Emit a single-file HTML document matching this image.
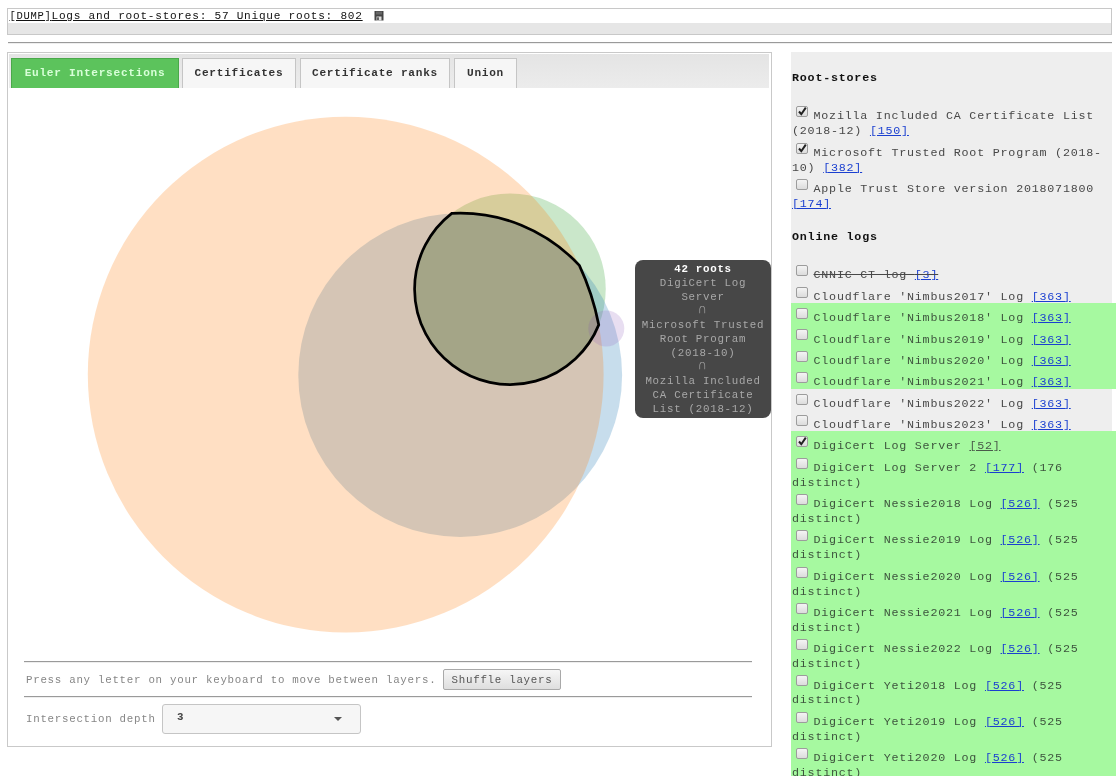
<!DOCTYPE html><html><head><meta charset="utf-8"><title>Logs and root-stores</title><style>
html,body{margin:0;padding:0;background:#fff;}
body{will-change:transform;}
body{width:1116px;height:776px;overflow:hidden;position:relative;font-family:"Liberation Mono",monospace;font-size:11.70px;letter-spacing:0.780px;color:#222;}
.abs{position:absolute;}
a{color:#1a3fd0;text-decoration:underline;}
#top{left:7px;top:8px;width:1103px;height:25px;border:1px solid #c8c8c8;background:#fff;box-sizing:content-box;}
#top .sb{left:0;top:14px;width:1103px;height:11px;background:#e6e6e6;}
#title{left:9.5px;top:9px;font-size:11.12px;letter-spacing:0.741px;line-height:15px;color:#111;text-decoration:underline;white-space:pre;}
#hr0{left:8px;top:42px;width:1104px;height:0;border-top:1px solid #9a9a9a;border-bottom:1px solid #eee;}
#left{left:7px;top:52px;width:763px;height:693px;border:1px solid #c9c9c9;background:#fff;}
#nav{left:1px;top:1px;width:760px;height:33.8px;background:linear-gradient(#e4e4e4,#ececec);}
.tab{position:absolute;top:3.5px;height:30px;box-sizing:border-box;border:1px solid #c5c5c5;border-bottom:none;background:#f6f6f6;font-size:11.12px;letter-spacing:0.741px;font-weight:bold;color:#333;line-height:28px;text-align:center;white-space:pre;}
.tab.act{background:#5cc35c;border-color:#4aa84a;color:#d8ffd8;}
#right{left:791px;top:52px;width:321px;height:740px;background:#eee;}
.h{position:absolute;left:792px;font-weight:bold;font-size:11.70px;letter-spacing:0.780px;line-height:15px;color:#111;white-space:pre;}
.row{position:absolute;left:791px;width:325px;}
.row.g{background:#a6f9a0;}
.row.g .t{color:#3d543d;}
.row .t{position:absolute;white-space:pre;font-size:11.70px;letter-spacing:0.780px;line-height:15px;color:#484848;}
.cb{position:absolute;left:5px;top:5px;width:10px;height:9px;border:1px solid #9c9c9c;border-radius:2px;background:linear-gradient(#f4f4f4,#dcdcdc);}
.cb svg{position:absolute;left:0;top:-1px;}
.hr{position:absolute;left:24px;width:728px;height:0;border-top:1px solid #9a9a9a;border-bottom:1px solid #eee;}
#press{left:26px;top:673.2px;font-size:10.80px;letter-spacing:0.720px;line-height:15px;color:#868686;white-space:pre;}
#btn{left:443px;top:669px;width:116px;height:19px;border:1px solid #a9a9a9;border-radius:2px;background:linear-gradient(#f6f6f6,#dedede);font-size:10.80px;letter-spacing:0.720px;line-height:21px;text-align:center;color:#555;white-space:pre;}
#depth{left:26px;top:712.2px;font-size:10.80px;letter-spacing:0.720px;line-height:15px;color:#868686;white-space:pre;}
#sel{left:162px;top:704px;width:197px;height:28px;border:1px solid #c5c5c5;border-radius:3px;background:#f6f6f6;}
#sel .v{left:14px;top:5px;font-size:10.80px;letter-spacing:0.720px;font-weight:bold;line-height:15px;color:#444;}
#sel .ar{left:171px;top:12px;width:0;height:0;border-left:4px solid transparent;border-right:4px solid transparent;border-top:4px solid #555;}
#tip{left:635px;top:260px;width:128px;height:154px;padding:2px 4px;border-radius:8px;background:rgba(51,51,51,0.9);color:#a8a8a8;font-size:10.80px;letter-spacing:0.720px;line-height:14px;text-align:center;white-space:pre;}
#tip b{color:#fff;}
.cap{display:inline-block;transform:scale(1.15,1.35);transform-origin:50% 85%;}
</style></head><body>
<div id="top" class="abs"><div class="sb abs"></div></div>
<div id="title" class="abs"><span style="font-size:10.5px;letter-spacing:0.70px">[DUMP]</span>Logs and root-stores: 57 Unique roots: 802</div>
<svg class="abs" style="left:374px;top:10px" width="10" height="11" viewBox="0 0 10 11"><path d="M0.5 1 h9 v9.5 h-9 z" fill="#444"/><rect x="2" y="1.5" width="6" height="3" fill="#666"/><rect x="2.5" y="6.5" width="5" height="4" fill="#ddd"/><rect x="3.2" y="7.3" width="1.6" height="2.7" fill="#444"/></svg>
<div id="hr0" class="abs"></div>
<div id="left" class="abs">
<div id="nav" class="abs">
<div class="tab act" style="left:2px;width:168px">Euler Intersections</div>
<div class="tab" style="left:173px;width:114px">Certificates</div>
<div class="tab" style="left:291px;width:150px">Certificate ranks</div>
<div class="tab" style="left:445px;width:63px">Union</div>
</div>
</div>
<svg class="abs" style="left:0;top:88px" width="772" height="570" viewBox="0 88 772 570">
<circle cx="510.16" cy="289.03" r="95.57" fill="#2ca02c" fill-opacity="0.25"/>
<circle cx="460.2" cy="375.05" r="161.9" fill="#1f77b4" fill-opacity="0.25"/>
<circle cx="345.7" cy="374.59" r="257.89" fill="#ff7f0e" fill-opacity="0.25"/>
<circle cx="606.3" cy="328.5" r="18" fill="#9467bd" fill-opacity="0.22"/>
<path d="M451.77 213.37 A161.9 161.9 0 0 1 579.35 265.44 A257.89 257.89 0 0 1 598.75 324.88 A95.57 95.57 0 1 1 451.77 213.37 Z" fill="#000" fill-opacity="0.1" stroke="#000" stroke-width="2.7" stroke-linejoin="miter"/>
</svg>
<div id="tip" class="abs"><b>42 roots</b>
DigiCert Log
Server
<span class="cap">∩</span>
Microsoft Trusted
Root Program
(2018-10)
<span class="cap">∩</span>
Mozilla Included
CA Certificate
List (2018-12)</div>
<div class="hr" style="top:661px"></div>
<div id="press" class="abs">Press any letter on your keyboard to move between layers.</div>
<div id="btn" class="abs">Shuffle layers</div>
<div class="hr" style="top:696px"></div>
<div id="depth" class="abs">Intersection depth</div>
<div id="sel" class="abs"><div class="v abs">3</div><div class="ar abs"></div></div>
<div id="right" class="abs"></div>
<div class="h" style="top:70.6px">Root-stores</div>
<div class="h" style="top:229.6px">Online logs</div>
<div class="row" style="top:101.30px;height:36.30px"><div class="cb"><svg width="11" height="11" viewBox="0 0 11 11"><path d="M2 5.5 L4.3 8.2 L8.8 1.6" fill="none" stroke="#222" stroke-width="2"/></svg></div><div class="t" style="left:22.5px;top:8.10px;">Mozilla Included CA Certificate List</div><div class="t" style="left:1px;top:22.95px;">(2018-12) <a>[150]</a></div></div>
<div class="row" style="top:137.60px;height:36.30px"><div class="cb"><svg width="11" height="11" viewBox="0 0 11 11"><path d="M2 5.5 L4.3 8.2 L8.8 1.6" fill="none" stroke="#222" stroke-width="2"/></svg></div><div class="t" style="left:22.5px;top:8.10px;">Microsoft Trusted Root Program (2018-</div><div class="t" style="left:1px;top:22.95px;">10) <a>[382]</a></div></div>
<div class="row" style="top:173.90px;height:36.30px"><div class="cb"></div><div class="t" style="left:22.5px;top:8.10px;">Apple Trust Store version 2018071800</div><div class="t" style="left:1px;top:22.95px;"><a>[174]</a></div></div>
<div class="row" style="top:260.30px;height:21.38px"><div class="cb"></div><div class="t" style="left:22.5px;top:8.10px;text-decoration:line-through;">CNNIC CT log <a>[3]</a></div></div>
<div class="row" style="top:281.68px;height:21.38px"><div class="cb"></div><div class="t" style="left:22.5px;top:8.10px;">Cloudflare 'Nimbus2017' Log <a>[363]</a></div></div>
<div class="row g" style="top:303.05px;height:21.38px"><div class="cb"></div><div class="t" style="left:22.5px;top:8.10px;">Cloudflare 'Nimbus2018' Log <a>[363]</a></div></div>
<div class="row g" style="top:324.43px;height:21.38px"><div class="cb"></div><div class="t" style="left:22.5px;top:8.10px;">Cloudflare 'Nimbus2019' Log <a>[363]</a></div></div>
<div class="row g" style="top:345.80px;height:21.38px"><div class="cb"></div><div class="t" style="left:22.5px;top:8.10px;">Cloudflare 'Nimbus2020' Log <a>[363]</a></div></div>
<div class="row g" style="top:367.18px;height:21.38px"><div class="cb"></div><div class="t" style="left:22.5px;top:8.10px;">Cloudflare 'Nimbus2021' Log <a>[363]</a></div></div>
<div class="row" style="top:388.55px;height:21.38px"><div class="cb"></div><div class="t" style="left:22.5px;top:8.10px;">Cloudflare 'Nimbus2022' Log <a>[363]</a></div></div>
<div class="row" style="top:409.93px;height:21.38px"><div class="cb"></div><div class="t" style="left:22.5px;top:8.10px;">Cloudflare 'Nimbus2023' Log <a>[363]</a></div></div>
<div class="row g" style="top:431.30px;height:21.38px"><div class="cb"><svg width="11" height="11" viewBox="0 0 11 11"><path d="M2 5.5 L4.3 8.2 L8.8 1.6" fill="none" stroke="#222" stroke-width="2"/></svg></div><div class="t" style="left:22.5px;top:8.10px;">DigiCert Log Server <a style="color:#4a5a4a">[52]</a></div></div>
<div class="row g" style="top:452.68px;height:36.30px"><div class="cb"></div><div class="t" style="left:22.5px;top:8.10px;">DigiCert Log Server 2 <a>[177]</a> (176</div><div class="t" style="left:1px;top:22.95px;">distinct)</div></div>
<div class="row g" style="top:488.98px;height:36.40px"><div class="cb"></div><div class="t" style="left:22.5px;top:8.10px;">DigiCert Nessie2018 Log <a>[526]</a> (525</div><div class="t" style="left:1px;top:22.95px;">distinct)</div></div>
<div class="row g" style="top:525.27px;height:36.40px"><div class="cb"></div><div class="t" style="left:22.5px;top:8.10px;">DigiCert Nessie2019 Log <a>[526]</a> (525</div><div class="t" style="left:1px;top:22.95px;">distinct)</div></div>
<div class="row g" style="top:561.57px;height:36.40px"><div class="cb"></div><div class="t" style="left:22.5px;top:8.10px;">DigiCert Nessie2020 Log <a>[526]</a> (525</div><div class="t" style="left:1px;top:22.95px;">distinct)</div></div>
<div class="row g" style="top:597.87px;height:36.40px"><div class="cb"></div><div class="t" style="left:22.5px;top:8.10px;">DigiCert Nessie2021 Log <a>[526]</a> (525</div><div class="t" style="left:1px;top:22.95px;">distinct)</div></div>
<div class="row g" style="top:634.17px;height:36.40px"><div class="cb"></div><div class="t" style="left:22.5px;top:8.10px;">DigiCert Nessie2022 Log <a>[526]</a> (525</div><div class="t" style="left:1px;top:22.95px;">distinct)</div></div>
<div class="row g" style="top:670.47px;height:36.40px"><div class="cb"></div><div class="t" style="left:22.5px;top:8.10px;">DigiCert Yeti2018 Log <a>[526]</a> (525</div><div class="t" style="left:1px;top:22.95px;">distinct)</div></div>
<div class="row g" style="top:706.77px;height:36.40px"><div class="cb"></div><div class="t" style="left:22.5px;top:8.10px;">DigiCert Yeti2019 Log <a>[526]</a> (525</div><div class="t" style="left:1px;top:22.95px;">distinct)</div></div>
<div class="row g" style="top:743.07px;height:36.40px"><div class="cb"></div><div class="t" style="left:22.5px;top:8.10px;">DigiCert Yeti2020 Log <a>[526]</a> (525</div><div class="t" style="left:1px;top:22.95px;">distinct)</div></div>
<div class="row g" style="top:779.37px;height:36.40px"><div class="cb"></div><div class="t" style="left:22.5px;top:8.10px;">DigiCert Yeti2021 Log <a>[526]</a> (525</div><div class="t" style="left:1px;top:22.95px;">distinct)</div></div>
</body></html>
